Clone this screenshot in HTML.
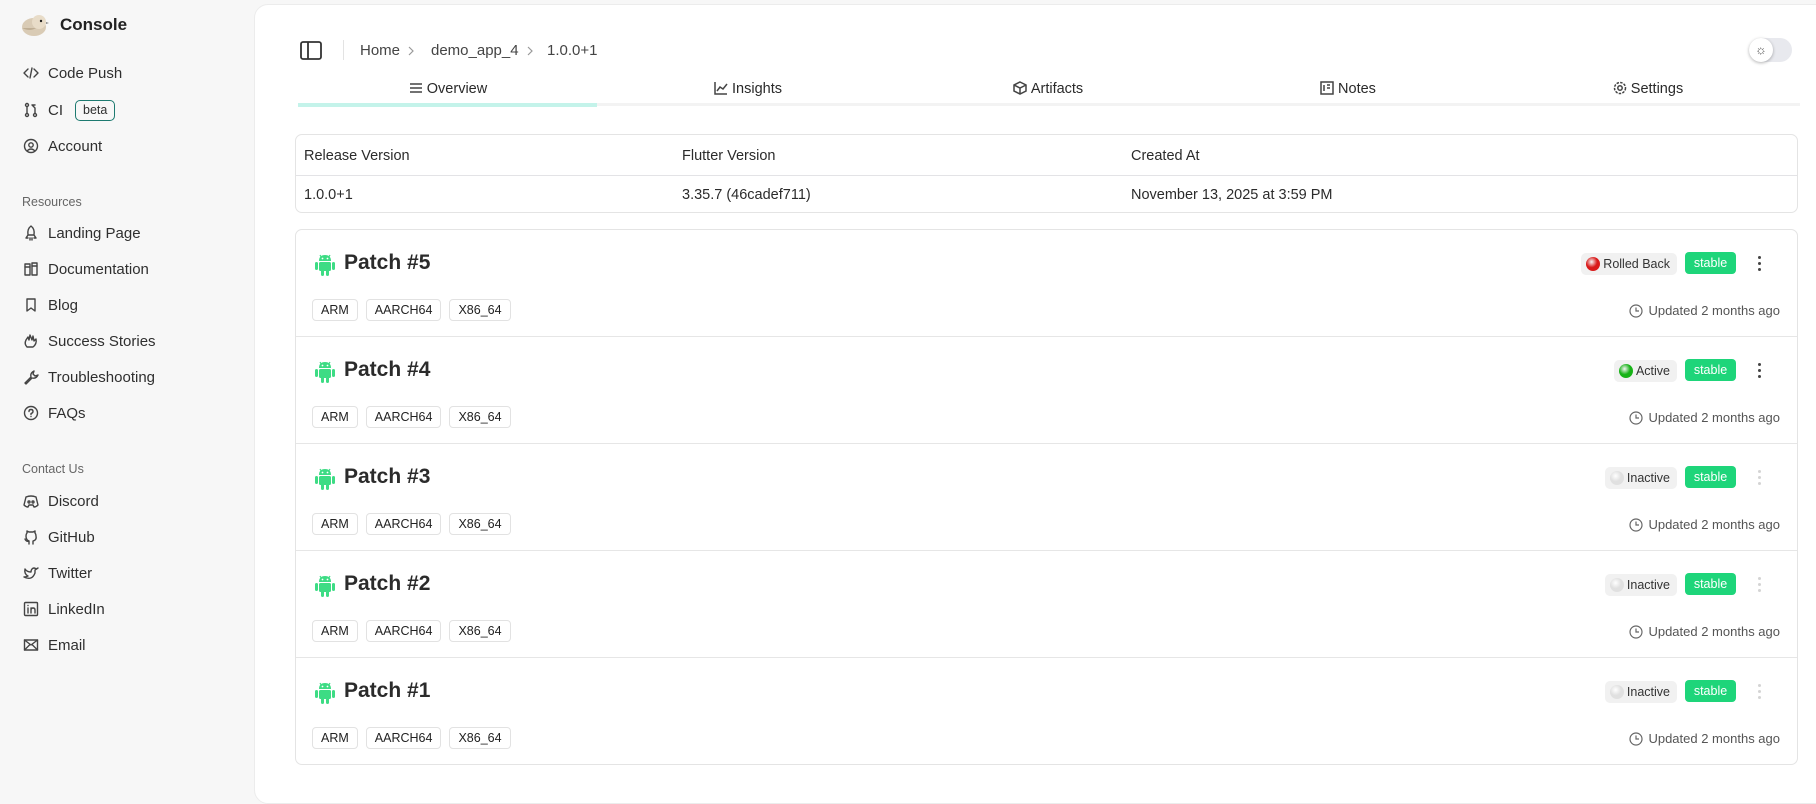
<!DOCTYPE html>
<html><head><meta charset="utf-8"><style>
*{box-sizing:border-box;margin:0;padding:0}
body{width:1816px;height:791px;overflow:hidden;background:#f7f7f7;font-family:"Liberation Sans",sans-serif;color:#2b2b2b;position:relative}
.abs{position:absolute}
.nav{position:absolute;left:23px;display:flex;align-items:center;gap:9px;font-size:15px;color:#2f2f2f;line-height:18px}
.nav svg{width:16px;height:16px;fill:none;stroke:#444;stroke-width:1.4;stroke-linecap:round;stroke-linejoin:round;margin-top:-2px}
.sec{position:absolute;left:22px;font-size:12.5px;color:#666}
.main{position:absolute;left:254px;top:4px;width:1580px;height:800px;background:#fff;border-radius:14px;border:1px solid #ececec}
.tab{position:absolute;top:81px;width:300px;text-align:center;font-size:14.5px;color:#2a2a2a}
.tab svg{width:14px;height:14px;vertical-align:-2px;fill:none;stroke:#444;stroke-width:1.5;margin-right:4px}
.card{position:absolute;left:295px;width:1503px;border:1px solid #e4e4e4;border-radius:7px;background:#fff}
.row{position:absolute;left:0;width:100%;height:107px;border-bottom:1px solid #e6e6e6}
.row:last-child{border-bottom:none}
.title{position:absolute;left:48px;top:21px;font-size:21px;font-weight:bold;color:#2b2b2b}
.andr{position:absolute;left:18px;top:23px}
.chips{position:absolute;left:16px;top:69px;display:flex;gap:8px}
.chip{border:1px solid #e2e2e2;border-radius:4px;font-size:12.5px;padding:3px 8px;color:#222;height:22px}
.upd{position:absolute;right:17px;top:73px;font-size:13px;color:#555;display:flex;align-items:center;gap:5px}
.stat{position:absolute;top:23px;height:22px;background:#f1f1f1;border-radius:5px;font-size:12.5px;color:#333;display:flex;align-items:center;padding:0 7px 0 5px;gap:3px}
.dot{width:14px;height:14px;border-radius:50%}
.stable{position:absolute;right:61px;top:22px;width:51px;height:22px;background:#1ed57a;color:#fff;border-radius:4px;font-size:12.5px;text-align:center;line-height:22px}
.keb{position:absolute;right:36px;top:26px;width:3px}
.keb i{display:block;width:3px;height:3px;border-radius:50%;background:#444;margin-bottom:3px}
.keb.l i{background:#d4d4d4}
</style></head><body>
<div class="abs" style="left:20px;top:12px;width:30px;height:26px">
<svg width="30" height="26" viewBox="0 0 30 26"><ellipse cx="14" cy="15" rx="12" ry="9" fill="#d9cbb5"/><circle cx="19" cy="10" r="7" fill="#e8dcc8"/><circle cx="21" cy="9" r="1.2" fill="#222"/><path d="M26 10l3 1-3 1z" fill="#888"/><path d="M2 16q8 4 14 0" fill="#bfae94"/></svg></div>
<div class="abs" style="left:60px;top:15px;font-size:17px;font-weight:bold;color:#222">Console</div>
<div class="nav" style="top:65px"><svg viewBox="0 0 16 16"><path d="M5 4L1 8l4 4M11 4l4 4-4 4M9 3L7 13"/></svg>Code Push</div>
<div class="nav" style="top:100px"><svg viewBox="0 0 16 16"><circle cx="4" cy="3" r="1.5"/><circle cx="4" cy="13" r="1.5"/><circle cx="12" cy="13" r="1.5"/><path d="M4 5v6M12 11V6L9 3M9 3h3"/></svg>CI <span style="border:1.5px solid #1d7a70;border-radius:5px;font-size:12.5px;padding:2px 7px;margin-left:3px;line-height:15px">beta</span></div>
<div class="nav" style="top:138px"><svg viewBox="0 0 16 16"><circle cx="8" cy="8" r="6.5"/><circle cx="8" cy="7" r="2.2"/><path d="M4.5 12.5q3.5-3 7 0"/></svg>Account</div>
<div class="sec" style="top:195px">Resources</div>
<div class="nav" style="top:225px"><svg viewBox="0 0 16 16"><path d="M8 1q4 3 3 9H5Q4 4 8 1zM5 10l-2 3h2M11 10l2 3h-2M7 13v2M9 13v2"/></svg>Landing Page</div>
<div class="nav" style="top:261px"><svg viewBox="0 0 16 16"><rect x="2" y="3" width="5" height="11"/><rect x="9" y="2" width="5" height="12"/><path d="M2 6h5M9 5h5"/></svg>Documentation</div>
<div class="nav" style="top:297px"><svg viewBox="0 0 16 16"><path d="M4 2h8v12l-4-3-4 3z"/></svg>Blog</div>
<div class="nav" style="top:333px"><svg viewBox="0 0 16 16"><path d="M4 14q-3-3-1-7l2-3 1 3 1-5 2 5 1-4 1 5 2-2q1 5-3 8z"/></svg>Success Stories</div>
<div class="nav" style="top:369px"><svg viewBox="0 0 16 16"><path d="M2 14l6-6q-1-4 3-6l-1 3 2 2 3-1q-2 4-6 3l-6 6z"/></svg>Troubleshooting</div>
<div class="nav" style="top:405px"><svg viewBox="0 0 16 16"><circle cx="8" cy="8" r="6.5"/><path d="M6 6.5q0-2 2-2t2 2q0 1.5-2 2v1M8 11.5v.1"/></svg>FAQs</div>
<div class="sec" style="top:462px">Contact Us</div>
<div class="nav" style="top:493px"><svg viewBox="0 0 16 16"><path d="M3 4q5-2 10 0l2 8q-2 2-4 2l-1-2H6l-1 2q-2 0-4-2z"/><circle cx="6" cy="9" r="1"/><circle cx="10" cy="9" r="1"/></svg>Discord</div>
<div class="nav" style="top:529px"><svg viewBox="0 0 16 16"><path d="M6 15v-3q-3 1-4-2M10 15v-3q4-1 3-5 0-2-1-3V2l-2 1H6L4 2v2Q3 5 3 7q0 4 3 5"/></svg>GitHub</div>
<div class="nav" style="top:565px"><svg viewBox="0 0 16 16"><path d="M15 3l-2 1q-2-2-4 0-1 1-1 3Q4 7 2 4q-1 5 3 7-2 1-4 1 8 4 11-4V5z"/></svg>Twitter</div>
<div class="nav" style="top:601px"><svg viewBox="0 0 16 16"><rect x="1.5" y="1.5" width="13" height="13" rx="1"/><path d="M5 7v5M5 4.5v.1M8 12V7M8 9q0-2 2-2t2 2v3"/></svg>LinkedIn</div>
<div class="nav" style="top:637px"><svg viewBox="0 0 16 16"><rect x="1.5" y="3" width="13" height="10"/><path d="M1.5 3l6.5 5 6.5-5M1.5 13l5-5M14.5 13l-5-5"/></svg>Email</div>

<div class="main"></div>
<svg class="abs" style="left:300px;top:41px" width="22" height="19" viewBox="0 0 22 19"><rect x="1" y="1" width="20" height="17" rx="2" fill="none" stroke="#333" stroke-width="1.8"/><path d="M8 1v17" stroke="#333" stroke-width="1.8"/></svg>
<div class="abs" style="left:343px;top:40px;width:1px;height:20px;background:#e3e3e3"></div>
<div class="abs" style="left:360px;top:42px;font-size:15px;color:#444">Home</div>
<svg class="abs" style="left:407px;top:46px" width="8" height="10" viewBox="0 0 8 10"><path d="M2 1l4 4-4 4" fill="none" stroke="#999" stroke-width="1.2"/></svg>
<div class="abs" style="left:431px;top:42px;font-size:15px;color:#444">demo_app_4</div>
<svg class="abs" style="left:526px;top:46px" width="8" height="10" viewBox="0 0 8 10"><path d="M2 1l4 4-4 4" fill="none" stroke="#999" stroke-width="1.2"/></svg>
<div class="abs" style="left:547px;top:42px;font-size:15px;color:#444">1.0.0+1</div>
<div class="abs" style="left:1749px;top:38px;width:43px;height:24px;border-radius:12px;background:#e8e9ee"></div>
<div class="abs" style="left:1749px;top:38px;width:24px;height:24px;border-radius:12px;background:#fff;box-shadow:0 1px 3px rgba(0,0,0,.3);text-align:center;line-height:24px;font-size:13px;color:#555">☼</div>
<div class="abs" style="left:298px;top:103px;width:1502px;height:3px;background:#f3f3f3"></div>
<div class="abs" style="left:298px;top:103px;width:299px;height:4px;background:#c4f3ea"></div>
<div class="tab" style="left:298px"><svg viewBox="0 0 14 14"><path d="M1 3h12M1 7h12M1 11h12"/></svg>Overview</div>
<div class="tab" style="left:598px"><svg viewBox="0 0 14 14"><path d="M1 1v12h12M3 10l3-4 3 2 4-5"/></svg>Insights</div>
<div class="tab" style="left:898px"><svg viewBox="0 0 14 14"><path d="M7 1l6 3v6l-6 3-6-3V4zM1 4l6 3 6-3M7 7v6"/></svg>Artifacts</div>
<div class="tab" style="left:1198px"><svg viewBox="0 0 14 14"><rect x="1" y="1" width="12" height="12"/><path d="M4 4v6M7 4h3M7 7h3"/></svg>Notes</div>
<div class="tab" style="left:1498px"><svg viewBox="0 0 14 14"><circle cx="7" cy="7" r="2.2"/><circle cx="7" cy="7" r="5.5" stroke-dasharray="2.5 1.2"/></svg>Settings</div>
<div class="card" style="top:134px;height:79px">
<div class="abs" style="left:0;top:40px;width:100%;height:1px;background:#e3e3e6"></div>
<div class="abs" style="left:8px;top:13px;font-size:14.5px">Release Version</div>
<div class="abs" style="left:386px;top:13px;font-size:14.5px">Flutter Version</div>
<div class="abs" style="left:835px;top:13px;font-size:14.5px">Created At</div>
<div class="abs" style="left:8px;top:52px;font-size:14.5px">1.0.0+1</div>
<div class="abs" style="left:386px;top:52px;font-size:14.5px">3.35.7 (46cadef711)</div>
<div class="abs" style="left:835px;top:52px;font-size:14.5px">November 13, 2025 at 3:59 PM</div>
</div>
<div class="card" style="top:229px;height:536px">
<div id="rows"></div>
</div>
<script>
var data=[["5","Rolled Back","#d91a1a",1],["4","Active","#17b317",1],["3","Inactive","#e0e0e0",0],["2","Inactive","#e0e0e0",0],["1","Inactive","#e0e0e0",0]];
var h="";
var andr='<svg class="andr" width="22" height="24" viewBox="0 0 22 24"><path d="M5 8q0-6 6-6t6 6z" fill="#3ddc84"/><path d="M6 2l1.5 2.5M16 2l-1.5 2.5" stroke="#3ddc84" stroke-width="1.2"/><circle cx="8.5" cy="5.5" r=".9" fill="#fff"/><circle cx="13.5" cy="5.5" r=".9" fill="#fff"/><rect x="5" y="9" width="12" height="9" rx="1.5" fill="#3ddc84"/><rect x="1" y="9" width="3" height="8" rx="1.5" fill="#3ddc84"/><rect x="18" y="9" width="3" height="8" rx="1.5" fill="#3ddc84"/><rect x="7" y="16" width="3" height="7" rx="1.5" fill="#3ddc84"/><rect x="12" y="16" width="3" height="7" rx="1.5" fill="#3ddc84"/></svg>';
data.forEach(function(d,i){
h+='<div class="row" style="top:'+(i*107)+'px">'+andr+'<div class="title">Patch #'+d[0]+'</div>'+
'<div class="chips"><span class="chip">ARM</span><span class="chip">AARCH64</span><span class="chip">X86_64</span></div>'+
'<div class="stat" style="right:120px"><span class="dot" style="background:radial-gradient(circle at 40% 35%,'+(d[3]?'#fff6':'#fff')+' 0,'+d[2]+' 45%)"></span>'+d[1]+'</div>'+
'<div class="stable">stable</div><div class="keb'+(d[3]?'':' l')+'"><i></i><i></i><i></i></div>'+
'<div class="upd"><svg width="14" height="14" viewBox="0 0 14 14" fill="none" stroke="#666" stroke-width="1.2"><circle cx="7" cy="7" r="6"/><path d="M7 3.5V7h3"/></svg>Updated 2 months ago</div></div>';
});
document.getElementById("rows").innerHTML=h;
</script>
</body></html>
